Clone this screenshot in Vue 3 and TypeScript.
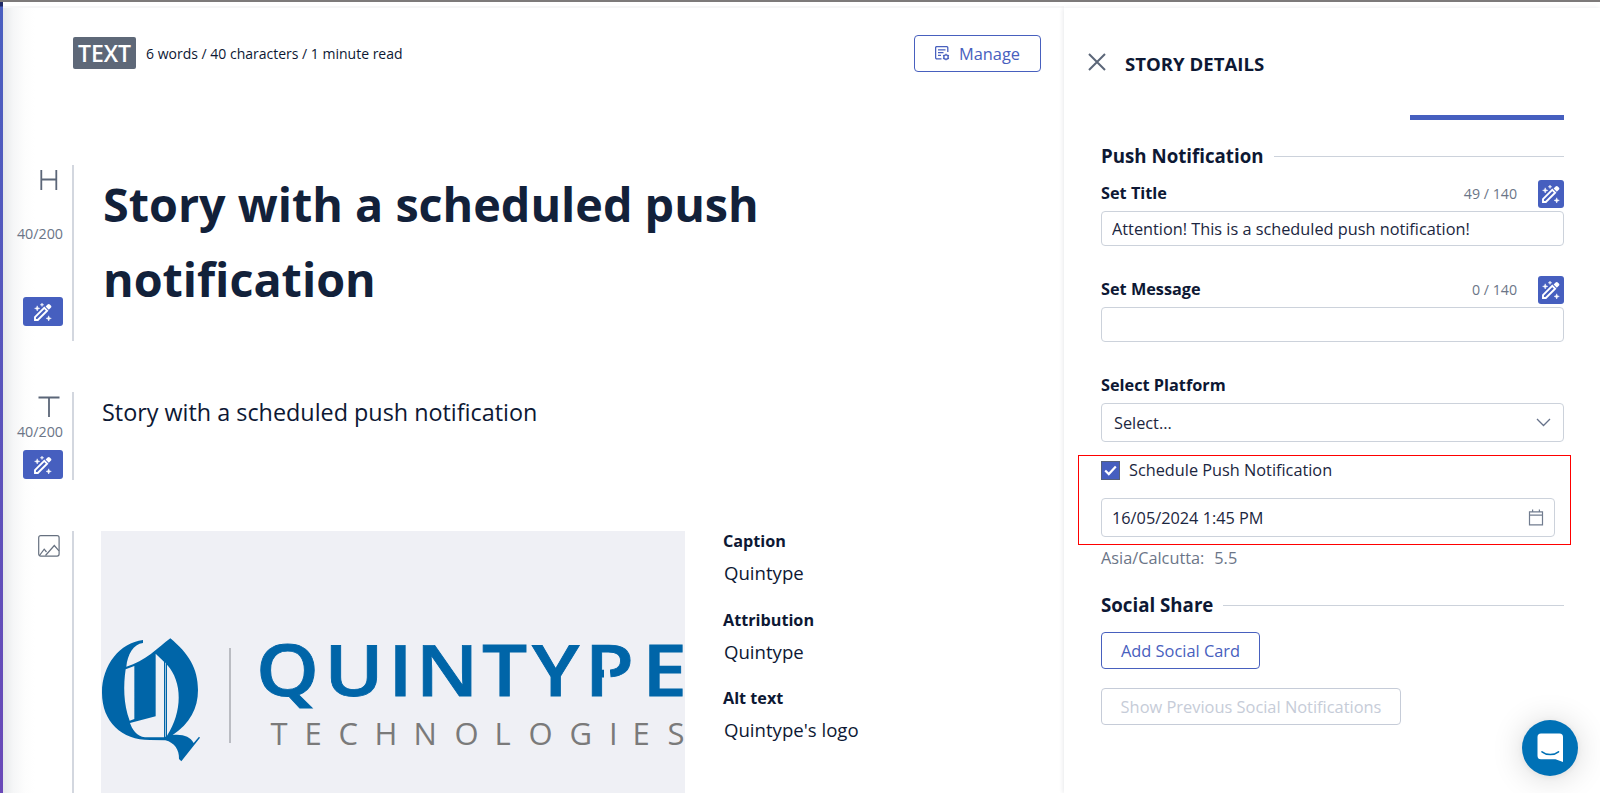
<script setup lang="ts">
import { computed, ref } from "vue";

type ImageMeta = {
  label: string;
  value: string;
};

type PushField = {
  id: string;
  label: string;
  value: string;
  used: number;
};

const headline = ref("Story with a scheduled push notification");
const bodyText = ref("Story with a scheduled push notification");
const headlineLimit = 200;
const pushLimit = 140;

const headlineCount = computed(() => `${headline.value.length}/${headlineLimit}`);
const bodyCount = computed(() => `${bodyText.value.length}/${headlineLimit}`);

const imageMeta: ImageMeta[] = [
  { label: "Caption", value: "Quintype" },
  { label: "Attribution", value: "Quintype" },
  { label: "Alt text", value: "Quintype's logo" },
];

const pushFields = ref<PushField[]>([
  { id: "title", label: "Set Title", value: "Attention! This is a scheduled push notification!", used: 49 },
  { id: "message", label: "Set Message", value: "", used: 0 },
]);

const scheduled = ref(true);
const scheduledAt = ref("16/05/2024 1:45 PM");

const toggleSchedule = () => {
  scheduled.value = !scheduled.value;
};
</script>

<template>
  <div class="page">
    <svg class="symbols" width="0" height="0">
      <symbol id="magic" viewBox="0 0 18 18">
        <path d="M1 17v-2.8l9.3-9.3 2.8 2.8L3.8 17z" fill="none" stroke="#fff" stroke-width="1.9" />
        <path d="M11.6 3.6l2-2c.8-.8 1.5-.8 2.2 0l1 1c.8.8.8 1.5 0 2.2l-2 2z" fill="#fff" />
        <path d="M3.2 2.8l.7 1.9 1.9.7-1.9.7-.7 1.9-.7-1.9-1.9-.7 1.9-.7z" fill="#fff" stroke="#fff" stroke-width=".5" />
        <path d="M8 0l.5 1.3 1.3.5-1.3.5L8 3.6l-.5-1.3-1.3-.5 1.3-.5z" fill="#fff" stroke="#fff" stroke-width=".4" />
        <path d="M14.7 12.8l.7 1.9 1.9.7-1.9.7-.7 1.9-.7-1.9-1.9-.7 1.9-.7z" fill="#fff" stroke="#fff" stroke-width=".5" />
      </symbol>
    </svg>

    <div class="top-line"></div>
    <div class="workspace">
      <div class="rail"></div>

      <main class="editor">
        <header class="editor-header">
          <span class="type-badge">TEXT</span>
          <span class="stats">6 words / 40 characters / 1 minute read</span>
          <button class="btn manage">
            <svg width="15" height="15" viewBox="0 0 15 15" fill="none" stroke="currentColor" stroke-width="1.3">
              <path d="M6.5 12.8H1.8A1.2 1.2 0 0 1 .6 11.6V1.8A1.2 1.2 0 0 1 1.8.6h9.8a1.2 1.2 0 0 1 1.2 1.2v4.2M3 3.8h7.5M3 6.6h5.5M3 9.4h3" />
              <circle cx="11" cy="11" r="2.2" />
              <path d="M11 7.7v1.1M11 13.2v1.1M8.1 9.3l1 .6M12.9 12.1l1 .6M8.1 12.7l1-.6M12.9 9.9l1-.6" />
            </svg>
            Manage
          </button>
        </header>

        <section class="block headline-block">
          <div class="gutter">
            <svg class="kind" width="22" height="22" viewBox="0 0 22 22" fill="none" stroke="#5b6678" stroke-width="1.8">
              <path d="M3.3 1v20M18.3 1v20M3.3 10.5h15" />
            </svg>
            <span class="count">{{ headlineCount }}</span>
            <button class="magic-btn"><svg width="18" height="18"><use href="#magic" /></svg></button>
          </div>
          <h1 class="headline">{{ headline }}</h1>
        </section>

        <section class="block text-block">
          <div class="gutter">
            <svg class="kind" width="22" height="22" viewBox="0 0 22 22" fill="none" stroke="#5b6678" stroke-width="1.8">
              <path d="M.5 1.5h21M11 1.5V21" />
            </svg>
            <span class="count">{{ bodyCount }}</span>
            <button class="magic-btn"><svg width="18" height="18"><use href="#magic" /></svg></button>
          </div>
          <p class="body-text">{{ bodyText }}</p>
        </section>

        <section class="block image-block">
          <div class="gutter">
            <svg class="kind" width="22" height="22" viewBox="0 0 22 22" fill="none" stroke="#66707f" stroke-width="1.2">
              <rect x=".7" y=".7" width="20.4" height="20.4" rx="2" />
              <path d="M1.5 20.5l4.7-6.3 2.3 2.8M7.5 20.5l8.8-10 4.7 5.3" />
            </svg>
          </div>
          <div class="picture">
            <svg width="584" height="262" viewBox="0 0 584 262">
              <g transform="translate(-11 79) scale(.33333)" fill="#0065a8">
                <path
                  fill-rule="evenodd"
                  d="M159 90C90 98 36 165 36 248C36 335 95 390 180 390L226 391C254 398 268 420 267 447L274 454L330 383L327 380L311 399C300 380 280 372 248 375C300 340 324 295 324 240C324 175 295 130 241 85C205 112 165 155 109 170C112 135 130 102 159 99ZM107 178L133 168V327L119 332C100 282 100 225 107 178ZM197 131L222 155V382H165C140 380 125 355 120 339L197 319ZM231 164C278 215 278 305 231 377ZM225.5 158H227.5V380H225.5Z"
                />
              </g>
              <path d="M129 117v95" stroke="#a9abb0" stroke-width="1.5" />
              <text class="logo-name" transform="scale(1.12 1)" y="165" x="138.4 199.3 256.5 281.1 340.1 384.8 431.9 483.3">QUINTYPE</text>
              <path d="M503 132h6v9l1 9h-7z" fill="#eff0f5" />
              <text class="logo-sub" y="214" x="169.5 203.5 237.5 273.5 312.5 353.5 393.5 427.5 468.5 508 531.5 566.5">TECHNOLOGIES</text>
            </svg>
          </div>
          <dl class="meta">
            <template v-for="item in imageMeta" :key="item.label">
              <dt>{{ item.label }}</dt>
              <dd>{{ item.value }}</dd>
            </template>
          </dl>
        </section>
      </main>

      <aside class="details">
        <header class="details-header">
          <svg width="18" height="18" viewBox="0 0 18 18" stroke="#5b6678" stroke-width="2">
            <path d="M1 1l16 16M17 1L1 17" />
          </svg>
          <h2>STORY DETAILS</h2>
        </header>
        <div class="tab-track"><span class="tab-indicator"></span></div>

        <h3 class="section-title"><span>Push Notification</span></h3>
        <div v-for="field in pushFields" :key="field.id" class="field">
          <div class="field-head">
            <label :for="field.id">{{ field.label }}</label>
            <span class="used">{{ field.used }} / {{ pushLimit }}</span>
            <button class="magic-btn small"><svg width="18" height="18"><use href="#magic" /></svg></button>
          </div>
          <input :id="field.id" v-model="field.value" type="text" class="input" />
        </div>

        <div class="platform">
          <label>Select Platform</label>
          <div class="select">
            <span>Select...</span>
            <svg width="15" height="9" viewBox="0 0 15 9" fill="none" stroke="#66728a" stroke-width="1.3">
              <path d="M1 1l6.5 6.5L14 1" />
            </svg>
          </div>
        </div>

        <div class="schedule">
          <div class="check-row" @click="toggleSchedule">
            <span class="checkbox" :class="{ checked: scheduled }">
              <svg v-if="scheduled" width="13" height="11" viewBox="0 0 13 11" fill="none" stroke="#fff" stroke-width="2.2">
                <path d="M1.2 5.5l3.6 3.6L11.8 1.5" />
              </svg>
            </span>
            <span>Schedule Push Notification</span>
          </div>
          <div class="date">
            <span>{{ scheduledAt }}</span>
            <svg width="16" height="17" viewBox="0 0 16 17" fill="none" stroke="#717c8f" stroke-width="1.2">
              <path d="M1.5 2.8h13v13h-13zM1.5 6.2h13M4.6 .5v2.3M11.4 .5v2.3" />
            </svg>
          </div>
        </div>
        <p class="timezone"><span>Asia/Calcutta:</span><span>5.5</span></p>

        <h3 class="section-title social"><span>Social Share</span></h3>
        <button class="btn add-card">Add Social Card</button>
        <button class="btn previous" disabled>Show Previous Social Notifications</button>
      </aside>
    </div>

    <button class="chat">
      <svg width="27" height="30" viewBox="0 0 27 30">
        <path d="M4 .5h18.5a3.500 3.500 0 0 1 3.5 3.5v25l-7.5-2.8H4A3.500 3.500 0 0 1 .5 22.7V4A3.500 3.500 0 0 1 4 .5z" fill="#fff" />
        <path d="M5 18.8c4.500 3.600 12 3.600 16.500 0" fill="none" stroke="#0071b6" stroke-width="1.6" stroke-linecap="round" />
      </svg>
    </button>
  </div>
</template>

<style>
body {
  margin: 0;
  background: #fff;
}
</style>

<style scoped>
.page {
  width: 1600px;
  height: 793px;
  overflow: hidden;
  display: flex;
  flex-direction: column;
  background: #fff;
  color: #0d1834;
  font-family: "Open Sans", sans-serif;
  font-size: 16px;
}

.page * {
  box-sizing: border-box;
}

.symbols {
  position: absolute;
}

button {
  font-family: inherit;
  padding: 0;
  cursor: pointer;
}

.top-line {
  height: 2px;
  flex: none;
  background: #7d7a7a;
}

.workspace {
  flex: 1;
  min-height: 0;
  display: flex;
}

.rail {
  width: 3px;
  background: linear-gradient(#1f2a66 0, #1f2a66 4px, #4a5fc0 5px, #6a49b8 100%);
}

.editor {
  width: 1061px;
  margin-top: 4px;
  border-top: 2px solid #f6f6f7;
  background: linear-gradient(90deg, #e6e8ea 0, #f5f6f7 10px, #fdfdfd 22px, #fff 32px);
}

.editor-header {
  display: flex;
  align-items: center;
  height: 38px;
  margin: 26px 23px 0 70px;
}

.type-badge {
  width: 63px;
  height: 32px;
  border-radius: 2px;
  background: #5e6878;
  color: #fff;
  font-size: 23px;
  font-weight: 600;
  line-height: 33px;
  text-align: center;
}

.stats {
  margin-left: 10px;
  font-size: 14px;
}

.btn {
  border: 1px solid #4860be;
  border-radius: 4px;
  background: #fff;
  color: #4860be;
  font-size: 16.4px;
}

.manage {
  display: flex;
  align-items: center;
  justify-content: center;
  gap: 9px;
  width: 127px;
  height: 37px;
  margin: 1px 0 0 auto;
}

.block {
  display: flex;
}

.headline-block {
  height: 176px;
  margin-top: 93px;
}

.text-block {
  height: 88px;
  margin-top: 51px;
}

.image-block {
  height: 262px;
  margin-top: 51px;
}

.gutter {
  display: flex;
  flex-direction: column;
  align-items: flex-end;
  width: 71px;
  padding-right: 9px;
  border-right: 2px solid #d3d7df;
}

.kind {
  margin: 4px 3px 0 0;
}

.count {
  margin-top: 33px;
  color: #6b7587;
  font-size: 14.3px;
  line-height: 20px;
}

.text-block .count {
  margin-top: 4px;
}

.magic-btn {
  display: flex;
  align-items: center;
  justify-content: center;
  width: 40px;
  height: 29px;
  margin-top: 53px;
  border: 0;
  border-radius: 3px;
  background: #465fbf;
}

.text-block .magic-btn {
  margin-top: 8px;
}

.headline {
  width: 720px;
  margin: 2px 0 0 29px;
  color: #12213a;
  font-size: 46.7px;
  font-weight: 700;
  line-height: 75px;
}

.body-text {
  margin: 3px 0 0 28px;
  font-size: 23.36px;
  line-height: 34px;
}

.picture {
  width: 584px;
  margin-left: 27px;
  background: #eff0f5;
}

.logo-name {
  fill: #0065a8;
  stroke: #0065a8;
  stroke-width: 0.8px;
  font-size: 71.5px;
  font-weight: 600;
}

.logo-sub {
  fill: #7a7a7a;
  font-size: 31px;
}

.meta {
  margin: -1px 0 0 38px;
}

.meta dt {
  height: 22px;
  font-size: 16.2px;
  font-weight: 700;
  line-height: 22px;
}

.meta dd {
  height: 22px;
  margin: 10px 0 24.5px 1px;
  font-size: 18.6px;
  line-height: 22px;
}

.details {
  width: 536px;
  margin-top: 6px;
  padding: 0 36px 0 37px;
  box-shadow: -1px 0 4px rgba(30, 40, 60, 0.1);
}

.details-header {
  display: flex;
  align-items: center;
  gap: 19px;
  height: 30px;
  margin: 39px 0 0 -13px;
}

.details-header h2 {
  margin: 3px 0 0;
  font-size: 18.6px;
  font-weight: 700;
}

.tab-track {
  display: flex;
  justify-content: flex-end;
  margin-top: 38px;
}

.tab-indicator {
  width: 154px;
  height: 5px;
  background: #465fbf;
}

.section-title {
  display: flex;
  align-items: center;
  gap: 10px;
  height: 26px;
  margin: 23px 0 11px;
  font-size: 18.7px;
  font-weight: 700;
}

.section-title span {
  padding-bottom: 2px;
}

.section-title::after {
  content: "";
  flex: 1;
  height: 1px;
  background: #ccd2db;
}

.field {
  height: 96px;
}

.field-head {
  display: flex;
  align-items: center;
  height: 28px;
}

label {
  padding-bottom: 2px;
  font-size: 16.3px;
  font-weight: 700;
}

.used {
  margin: 0 21px 0 auto;
  padding-bottom: 2px;
  color: #6b7587;
  font-size: 14.2px;
}

.magic-btn.small {
  width: 26px;
  height: 28px;
  margin: 0;
}

.input {
  display: block;
  width: 100%;
  height: 35px;
  margin-top: 3px;
  padding: 0 10px;
  border: 1px solid #ccd2db;
  border-radius: 4px;
  background: #fff;
  color: #1b2640;
  font-family: inherit;
  font-size: 16.3px;
}

.platform label {
  display: block;
  height: 24px;
  margin: 1px 0 6px;
  line-height: 24px;
}

.select,
.date {
  display: flex;
  align-items: center;
  justify-content: space-between;
  height: 39px;
  padding: 0 12px;
  border: 1px solid #ccd2db;
  border-radius: 4px;
  background: #fff;
  color: #1b2640;
  font-size: 16.3px;
}

/* highlighted scheduling controls, bleeding past the panel padding */
.schedule {
  height: 90px;
  margin: 13px -7px 0 -23px;
  padding: 4px 15px 0 22px;
  border: 1px solid #f00;
}

.check-row {
  display: flex;
  align-items: center;
  gap: 9px;
  height: 20px;
  margin-bottom: 18px;
  color: #1b2640;
  font-size: 16.3px;
}

.checkbox {
  display: flex;
  align-items: center;
  justify-content: center;
  width: 19px;
  height: 19px;
  border: 1px solid #56617a;
}

.checked {
  background: #465fbf;
}

.date {
  padding: 0 10px;
}

.timezone {
  display: flex;
  gap: 10px;
  height: 24px;
  margin: 1px 0 0;
  color: #6b7587;
  font-size: 16.3px;
  line-height: 24px;
}

.section-title.social {
  margin: 22px 0 14px;
}

.details .btn {
  display: block;
  height: 37px;
}

.add-card {
  width: 159px;
}

.details .previous {
  width: 300px;
  margin-top: 19px;
  border-color: #c6ccd8;
  color: #c6ccd8;
}

/* floating messenger launcher */
.chat {
  position: absolute;
  left: 1522px;
  top: 720px;
  display: flex;
  align-items: center;
  justify-content: center;
  width: 56px;
  height: 56px;
  border: 0;
  border-radius: 50%;
  background: #0071b6;
  box-shadow: 0 1px 6px rgba(0, 0, 0, 0.06), 0 2px 32px rgba(0, 0, 0, 0.16);
}
</style>
